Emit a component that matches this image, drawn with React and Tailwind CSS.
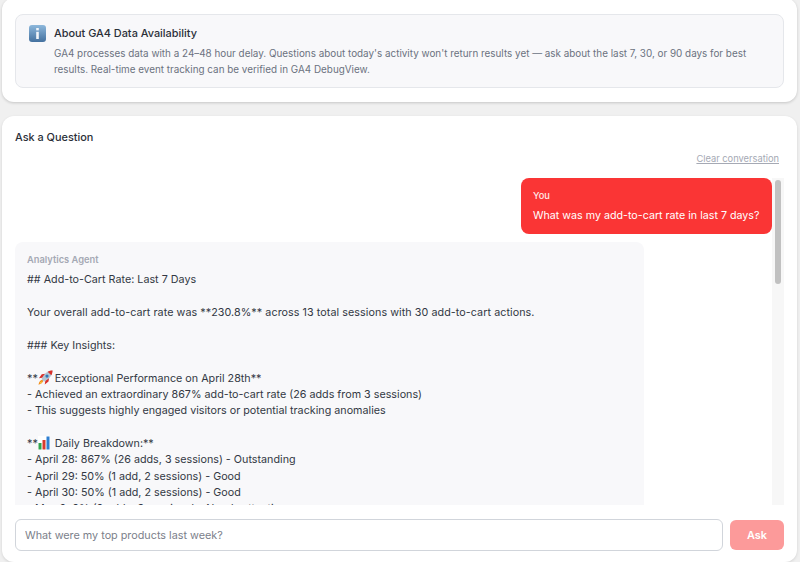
const Rocket = () => (
  <svg viewBox="0 0 16 16" className="inline-block w-[15px] h-[15px] align-[-3px]">
    <path d="M6 8 1 8.800 4 4.500 8 4zM8 10.500 7.200 15.500l4-3.200.7-4z" fill="#d9302a" />
    <path d="M4.600 10.500C2.600 11 1 12.800.5 15.600c2.800-.5 4.600-2.100 5.100-4.100z" fill="#f28c16" />
    <path d="M3.600 12.200c-.9.4-1.500 1.200-1.700 2.400 1.200-.2 2-.8 2.400-1.700z" fill="#fbd24e" />
    <path d="M15.500.5c-4.200.2-7.600 2.300-10 5.900L3.700 9.700l2.700 2.700 3.300-1.900c3.600-2.400 5.600-5.800 5.800-10z" fill="#b4c4d2" />
    <path d="M15.500.5c-1.900 0-3.700.5-5.200 1.300l3.900 3.900c.8-1.500 1.300-3.300 1.300-5.200z" fill="#d9302a" />
    <circle cx="9.600" cy="6.500" r="1.700" fill="#2f78b8" />
  </svg>
);
const Chart = () => (
  <svg viewBox="0 0 12 14" className="mr-[2px] inline-block w-[12px] h-[14px] align-[-3px]">
    <rect width="12" height="14" fill="#ffffff" />
    <rect x="0.500" y="7" width="3" height="6.500" fill="#2fa44f" />
    <rect x="4.500" y="4" width="3" height="9.500" fill="#d83a2e" />
    <rect x="8.500" y="0.500" width="3" height="13" fill="#2f7fd1" />
  </svg>
);
const Info = () => (
  <svg viewBox="0 0 17 17" className="w-[17px] h-[17px] shrink-0">
    <defs>
      <linearGradient id="g" x1="0" y1="0" x2="0" y2="1">
        <stop offset="0" stopColor="#8db8dc" />
        <stop offset="1" stopColor="#44719f" />
      </linearGradient>
    </defs>
    <rect width="17" height="17" rx="3" fill="url(#g)" />
    <rect x="7.200" y="3" width="2.600" height="2.400" fill="#f2f6fa" />
    <rect x="7.200" y="6.800" width="2.600" height="7.200" fill="#f2f6fa" />
  </svg>
);

const lines = [
  ["## Add-to-Cart Rate: Last 7 Days"],
  [""],
  [<span key="s" className="tracking-[0.06px]">Your overall add-to-cart rate was **230.8%** across 13 total sessions with 30 add-to-cart actions.</span>],
  [""],
  ["### Key Insights:"],
  [""],
  ["**", <Rocket key="r" />, <span key="e" className="ml-[-1px]"> Exceptional Performance on April 28th**</span>],
  ["- Achieved an extraordinary 867% add-to-cart rate (26 adds from 3 sessions)"],
  ["- This suggests highly engaged visitors or potential tracking anomalies"],
  [""],
  ["**", <Chart key="c" />, " Daily Breakdown:**"],
  ["- April 28: 867% (26 adds, 3 sessions) - Outstanding"],
  ["- April 29: 50% (1 add, 2 sessions) - Good"],
  ["- April 30: 50% (1 add, 2 sessions) - Good"],
  ["- May 2: 0% (0 adds, 3 sessions) - Needs attention"],
];

export default function App() {
  return (
    <div className="h-[562px] overflow-hidden bg-[#f0f0f0] pl-[2px] pr-[3px] font-['Inter',sans-serif]">
      <div className="-mt-[2px] h-[104px] rounded-[12px] bg-white px-[13px] pt-[16px] shadow-[0_1px_3px_rgba(0,0,0,0.18)]">
        <div className="flex h-[74px] gap-[8px] rounded-[8px] border border-[#e5e7eb] bg-[#f8f8fa] px-[13px] pt-[10px]">
          <Info />
          <div>
            <div className="text-[10.900px] leading-[17px] font-medium text-[#2b2f38]">About GA4 Data Availability</div>
            <p className="mt-[4px] text-[9.900px] leading-[15.500px] text-[#6b7280]">
              GA4 processes data with a 24–48 hour delay. Questions about today's activity won't return results yet — ask about the last 7, 30, or 90 days for best results. Real-time event tracking can be verified in GA4 DebugView.
            </p>
          </div>
        </div>
      </div>

      <div className="mt-[14px] flex h-[446px] flex-col rounded-[12px] bg-white px-[13px] shadow-[0_1px_3px_rgba(0,0,0,0.12)]">
        <h2 className="mt-[13px] text-[10.900px] leading-[17px] font-medium text-[#2b2f38]">Ask a Question</h2>
        <div className="mt-[5px] flex justify-end pr-[5px]">
          <button className="text-[9.300px] leading-[15px] text-[#a5a9b4] underline">Clear conversation</button>
        </div>
        <div className="mt-[12px] flex h-[327px] gap-0">
          <div className="min-w-0 flex-1 overflow-hidden">
            <div className="flex justify-end">
              <div className="h-[56px] w-[251px] rounded-[8px] bg-[#fa3535] px-[12px] pt-[10px] text-white">
                <div className="text-[9.300px] leading-[15px] font-medium text-[#ffe9e9]">You</div>
                <div className="mt-[4px] whitespace-nowrap text-[10.700px] leading-[17px]">What was my add-to-cart rate in last 7 days?</div>
              </div>
            </div>
            <div className="mt-[8px] w-[629px] rounded-[8px] bg-[#f8f8fa] px-[12px] pt-[10px] pb-[20px]">
              <div className="text-[9.300px] leading-[15px] font-semibold text-[#a5a9b4]">Analytics Agent</div>
              <div className="mt-[5px] text-[10.750px] leading-[16.400px] text-[#333844]">
                {lines.map((l, i) => (
                  <div key={i} className="h-[16.400px] whitespace-pre">{l}</div>
                ))}
              </div>
            </div>
          </div>
          <div className="w-[12px] shrink-0 bg-[#f7f7f7] px-[3px] py-[2px]">
            <div className="h-[104px] rounded-full bg-[#c1c1c1]" />
          </div>
        </div>
        <div className="mt-[14px] flex items-center gap-[7px]">
          <input
            readOnly
            placeholder="What were my top products last week?"
            className="h-[32px] min-w-0 flex-1 rounded-[6px] border border-[#d1d5db] bg-white px-[9px] text-[10.800px] outline-none placeholder:text-[#7b808a]"
          />
          <button className="h-[30px] w-[54px] rounded-[6px] bg-[#fc9a9a] text-[10.900px] font-semibold text-white">Ask</button>
        </div>
      </div>
    </div>
  );
}
